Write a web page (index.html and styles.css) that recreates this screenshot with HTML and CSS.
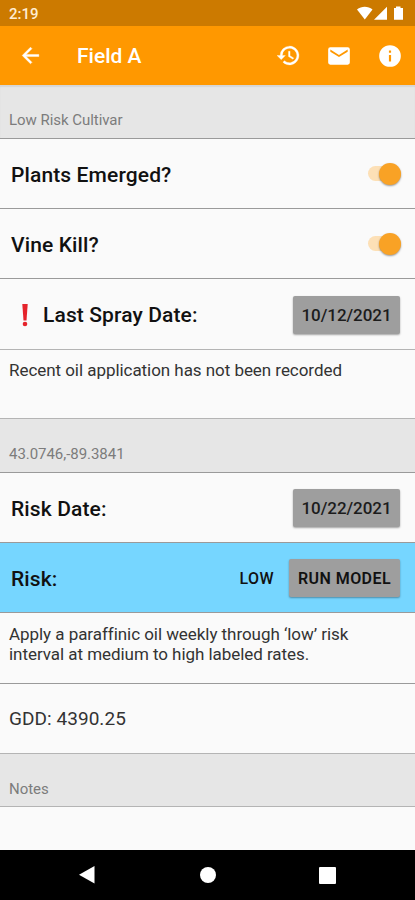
FILE: index.html
```html
<!DOCTYPE html>
<html lang="en">
<head>
<meta charset="utf-8">
<meta name="viewport" content="width=device-width">
<title>Field A</title>
<link rel="stylesheet" href="styles.css">
</head>
<body>
<div class="status">
  <span class="clock">2:19</span>
  <svg class="status-icons" width="48" height="16" viewBox="0 0 48 16" fill="#fff">
    <path d="M1 3.500C5.500-.2 12-.2 16.500 3.500L8.800 13.500Z"/>
    <path d="M31 0.700V13.700H18Z"/>
    <path d="M38 2H40V.5H44.500V2H47V13.700H38Z"/>
  </svg>
</div>
<header class="bar">
  <svg class="back" width="25" height="25" viewBox="0 0 24 24"><path fill="#fff" stroke="#fff" stroke-width=".4" d="M20 11H7.830l5.590-5.590L12 4l-8 8 8 8 1.410-1.410L7.830 13H20v-2z"/></svg>
  <h1>Field A</h1>
  <div class="actions">
    <svg width="25" height="25" viewBox="0 0 24 24" fill="#fff" stroke="#fff" stroke-width=".3"><path d="M13 3a9 9 0 0 0-9 9H1l3.890 3.890.070.140L9 12H6a7 7 0 1 1 2.060 4.940l-1.420 1.420A9 9 0 1 0 13 3zm-1 5v5l4.280 2.540.720-1.210-3.500-2.080V8H12z"/></svg>
    <svg width="26" height="26" viewBox="0 0 24 24" fill="#fff"><path d="M20 4H4a2 2 0 0 0-2 2v12a2 2 0 0 0 2 2h16a2 2 0 0 0 2-2V6a2 2 0 0 0-2-2zm0 4-8 5-8-5V6l8 5 8-5v2z"/></svg>
    <svg width="26" height="26" viewBox="0 0 24 24" fill="#fff"><path d="M12 2a10 10 0 1 0 0 20 10 10 0 0 0 0-20zm1 15h-2v-6h2v6zm0-8h-2V7h2v2z"/></svg>
  </div>
</header>
<main>
  <div class="section first">Low Risk Cultivar</div>
  <div class="row"><span class="label">Plants Emerged?</span><span class="switch"></span></div>
  <div class="row"><span class="label">Vine Kill?</span><span class="switch"></span></div>
  <div class="row tall light">
    <svg class="alert" width="8" height="24" viewBox="0 0 8 24" fill="#e5232b"><path d="M1.300 1H6.700L5.500 17.500H2.500Z"/><circle cx="4" cy="21" r="2.300"/></svg>
    <span class="label">Last Spray Date:</span>
    <button>10/12/2021</button>
  </div>
  <div class="note short light">Recent oil application has not been recorded</div>
  <div class="section">43.0746,-89.3841</div>
  <div class="row"><span class="label">Risk Date:</span><button>10/22/2021</button></div>
  <div class="row risk"><span class="label">Risk:</span><span class="level">LOW</span><button class="run">RUN MODEL</button></div>
  <div class="note">Apply a paraffinic oil weekly through ‘low’ risk<br>interval at medium to high labeled rates.</div>
  <div class="row light"><span class="gdd">GDD: 4390.25</span></div>
  <div class="section notes light">Notes</div>
  <div class="blank"></div>
</main>
<nav>
  <svg width="18" height="20" viewBox="0 0 18 20"><path fill="#fff" d="M16.500 1V18.500L1 9.800Z"/></svg>
  <span class="home"></span>
  <span class="recent"></span>
</nav>
</body>
</html>
```
FILE: styles.css
```css
* { box-sizing: border-box; }
body {
  margin: 0;
  width: 415px;
  height: 900px;
  overflow: hidden;
  display: flex;
  flex-direction: column;
  background: #fafafa;
  color: #111;
  font-family: Roboto, "Liberation Sans", sans-serif;
}
.status {
  height: 26px;
  flex: none;
  padding: 0 11px 0 9px;
  display: flex;
  justify-content: space-between;
  background: #cc7a00;
  color: #ffedd2;
}
.clock { font-size: 15px; font-weight: 500; line-height: 28px; }
.status-icons { margin-top: 6px; }
.bar {
  height: 59px;
  flex: none;
  display: flex;
  align-items: center;
  padding: 0 12px 0 18px;
  background: #ff9800;
  color: #fff;
}
h1 { margin: 1px 0 0 34px; font-size: 21px; font-weight: 500; line-height: 28px; }
.actions { display: flex; align-items: center; gap: 25px; margin-left: auto; }
main { flex: 1; display: flex; flex-direction: column; }
.section, .row, .note { flex: none; border-bottom: 1px solid #9a9a9a; }
.section {
  height: 54px;
  padding: 25px 9px 0;
  background: #e6e6e6;
  color: #7c7c7c;
  font-size: 15px;
  letter-spacing: -.04px;
  line-height: 20px;
}
.section.first { box-shadow: inset 0 2px 1px #d6d6d6; }
.section.notes { height: 53px; }
.row {
  height: 70px;
  padding: 1px 15px 0 11px;
  display: flex;
  align-items: center;
}
.row.tall { height: 71px; }
.row.light, .section.light, .note.light { border-bottom-color: #b4b4b4; }
.label {
  padding-top: 1px;
  font-size: 21px;
  font-weight: 500;
  letter-spacing: .12px;
  white-space: nowrap;
}
.switch {
  position: relative;
  width: 33px;
  height: 15px;
  margin: 0 -1px 1px auto;
  border-radius: 8px;
  background: #fde0b6;
}
.switch::after {
  content: "";
  position: absolute;
  right: 0;
  top: -3px;
  width: 22px;
  height: 22px;
  border-radius: 50%;
  background: #f9a225;
  box-shadow: 0 1px 2px rgba(0, 0, 0, .4);
}
.alert { margin: 0 14px 0 10px; }
button {
  width: 107px;
  height: 38px;
  margin-left: auto;
  padding: 0;
  border: 0;
  border-radius: 2px;
  background: #9e9e9e;
  color: #1c1c1c;
  box-shadow: 0 1px 2px rgba(0, 0, 0, .35);
  font: 500 17px Roboto, "Liberation Sans", sans-serif;
  letter-spacing: -.05px;
  white-space: nowrap;
}
.note {
  height: 71px;
  padding: 11px 9px 0;
  color: #333;
  font-size: 17px;
  letter-spacing: -.05px;
  line-height: 20px;
  white-space: nowrap;
}
.note.short { height: 69px; padding-top: 10px; }
.risk { background: #76d6ff; }
.level { margin-left: auto; font-size: 16px; font-weight: 500; letter-spacing: .4px; }
.run { width: 111px; margin-left: 15px; color: #111; font-size: 16px; font-weight: 600; letter-spacing: .45px; }
.gdd { margin-left: -2px; margin-top: -2px; font-size: 19px; letter-spacing: .05px; color: #333; }
.blank { flex: 1; }
nav {
  height: 50px;
  flex: none;
  display: flex;
  align-items: center;
  padding: 0 79px 0 78px;
  justify-content: space-between;
  background: #000;
}
.home { width: 16px; height: 16px; border-radius: 50%; background: #fff; }
.recent { width: 17px; height: 17px; border-radius: 1px; background: #fff; }
```
